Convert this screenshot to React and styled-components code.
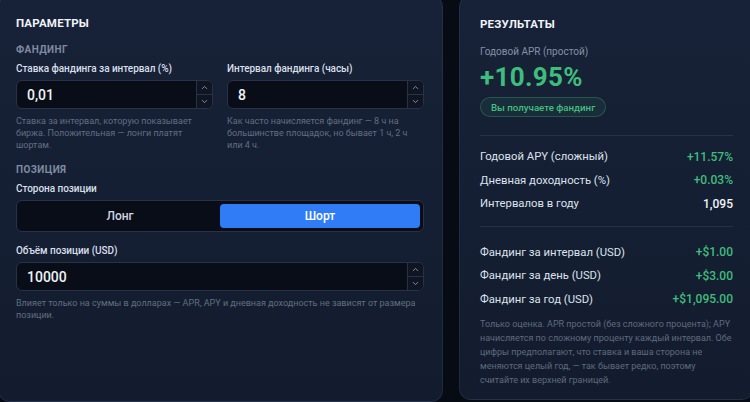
import React from "react";
import styled, { createGlobalStyle } from "styled-components";
import { ChevronUp, ChevronDown } from "lucide-react";

const Global = createGlobalStyle`
  html, body { margin: 0; padding: 0; overflow: hidden; background: #070b13; }
  body { font-family: Roboto, "Noto Sans", sans-serif; color: #e6ebf3; -webkit-font-smoothing: antialiased; }
  * { box-sizing: border-box; }
`;

const Page = styled.div`
  display: grid;
  grid-template-columns: 445px 295px;
  column-gap: 16px;
  align-items: start;
  margin: -5px 0 0 -2px;
`;

const Panel = styled.section`
  background: linear-gradient(180deg, #172238 0%, #131c2e 100%);
  border: 1px solid rgba(130, 150, 190, 0.12);
  border-radius: 12px;
  height: ${(p) => p.$h}px;
  padding: ${(p) => p.$pad};
`;

const Title = styled.h2`
  margin: 0;
  font-size: 11.5px;
  line-height: 16px;
  font-weight: 700;
  letter-spacing: 0.2px;
  color: #f1f4f9;
`;

const Section = styled.div`
  margin-top: ${(p) => p.$mt}px;
  font-size: 10px;
  line-height: 14px;
  font-weight: 700;
  letter-spacing: 0.4px;
  color: #7f8aa0;
`;

const Label = styled.div`
  margin-top: ${(p) => p.$mt || 5}px;
  font-size: 10px;
  line-height: 14px;
  font-weight: 500;
  letter-spacing: -0.05px;
  color: #d9dfe9;
`;

const Cols = styled.div`
  display: grid;
  grid-template-columns: 1fr 1fr;
  column-gap: 14px;
`;

const Field = styled.div`
  margin-top: 4px;
  height: 29px;
  display: flex;
  background: #090d17;
  border: 1px solid #283246;
  border-radius: 6px;
  overflow: hidden;
`;

const Value = styled.div`
  flex: 1;
  padding-left: 10px;
  display: flex;
  align-items: center;
  font-size: 14px;
  font-weight: 500;
  color: #eef2f8;
`;

const Stepper = styled.div`
  width: 16px;
  display: flex;
  flex-direction: column;
  border-left: 1px solid #283246;
  background: #0f1522;
`;

const StepBtn = styled.div`
  flex: 1;
  display: flex;
  align-items: center;
  justify-content: center;
  color: #9aa4b6;
  & + & { border-top: 1px solid #283246; }
`;

const Help = styled.p`
  margin: 6px 0 0;
  font-size: 9px;
  line-height: 12px;
  color: #626d81;
`;

const Toggle = styled.div`
  margin-top: 4px;
  height: 32px;
  padding: 3px;
  display: grid;
  grid-template-columns: 1fr 1fr;
  background: #090d17;
  border: 1px solid #283246;
  border-radius: 6px;
`;

const ToggleBtn = styled.div`
  display: flex;
  align-items: center;
  justify-content: center;
  border-radius: 4px;
  font-size: 12px;
  font-weight: 500;
  color: ${(p) => (p.$active ? "#ffffff" : "#cfd6e2")};
  background: ${(p) => (p.$active ? "#2f7cf6" : "transparent")};
`;

const Muted = styled.div`
  margin-top: ${(p) => p.$mt}px;
  font-size: 10px;
  line-height: 14px;
  color: #8590a4;
`;

const Big = styled.div`
  margin-top: 3px;
  font-size: 26px;
  line-height: 30px;
  font-weight: 700;
  letter-spacing: 0.3px;
  color: #3fbd7c;
`;

const Pill = styled.div`
  display: inline-flex;
  align-items: center;
  margin-top: 5px;
  height: 20px;
  padding: 0 10px;
  border-radius: 999px;
  border: 1px solid rgba(63, 189, 124, 0.3);
  background: rgba(63, 189, 124, 0.08);
  font-size: 9.7px;
  font-weight: 500;
  color: #44bf80;
`;

const Divider = styled.hr`
  margin: ${(p) => p.$m};
  border: 0;
  border-top: 1px solid rgba(140, 160, 200, 0.14);
`;

const Row = styled.div`
  height: 23.5px;
  display: flex;
  align-items: center;
  justify-content: space-between;
  font-size: 11.3px;
  font-weight: 400;
  color: #dce2ec;
`;

const Num = styled.span`
  font-size: 12px;
  font-weight: 500;
  color: ${(p) => (p.$green ? "#3fbd7c" : "#f1f4f9")};
`;

const Footer = styled.p`
  margin: 6px 0 0;
  font-size: 9px;
  line-height: 14px;
  color: #5f6a7e;
`;

function NumberField({ value }) {
  return (
    <Field>
      <Value>{value}</Value>
      <Stepper>
        <StepBtn><ChevronUp size={9} strokeWidth={2.2} /></StepBtn>
        <StepBtn><ChevronDown size={9} strokeWidth={2.2} /></StepBtn>
      </Stepper>
    </Field>
  );
}

const rows1 = [
  ["Годовой APY (сложный)", "+11.57%", true],
  ["Дневная доходность (%)", "+0.03%", true],
  ["Интервалов в году", "1,095", false],
];
const rows2 = [
  ["Фандинг за интервал (USD)", "+$1.00", true],
  ["Фандинг за день (USD)", "+$3.00", true],
  ["Фандинг за год (USD)", "+$1,095.00", true],
];

export default function App() {
  return (
    <>
      <Global />
      <Page>
        <Panel $h={407} $pad="19px 18px 20px 17px">
          <Title>ПАРАМЕТРЫ</Title>
          <Section $mt={12}>ФАНДИНГ</Section>
          <Cols>
            <div>
              <Label>Ставка фандинга за интервал (%)</Label>
              <NumberField value="0,01" />
              <Help>Ставка за интервал, которую показывает биржа. Положительная — лонги платят шортам.</Help>
            </div>
            <div>
              <Label>Интервал фандинга (часы)</Label>
              <NumberField value="8" />
              <Help>Как часто начисляется фандинг — 8 ч на большинстве площадок, но бывает 1 ч, 2 ч или 4 ч.</Help>
            </div>
          </Cols>
          <Section $mt={12}>ПОЗИЦИЯ</Section>
          <Label>Сторона позиции</Label>
          <Toggle>
            <ToggleBtn>Лонг</ToggleBtn>
            <ToggleBtn $active>Шорт</ToggleBtn>
          </Toggle>
          <Label $mt={12}>Объём позиции (USD)</Label>
          <NumberField value="10000" />
          <Help>Влияет только на суммы в долларах — APR, APY и дневная доходность не зависят от размера позиции.</Help>
        </Panel>
        <Panel $h={405} $pad="20px 20px 20px 20px">
          <Title>РЕЗУЛЬТАТЫ</Title>
          <Muted $mt={13}>Годовой APR (простой)</Muted>
          <Big>+10.95%</Big>
          <Pill>Вы получаете фандинг</Pill>
          <Divider $m="18px 0 9px" />
          {rows1.map(([l, v, g]) => (
            <Row key={l}><span>{l}</span><Num $green={g}>{v}</Num></Row>
          ))}
          <Divider $m="10px 0 14px" />
          {rows2.map(([l, v, g]) => (
            <Row key={l}><span>{l}</span><Num $green={g}>{v}</Num></Row>
          ))}
          <Footer>Только оценка. APR простой (без сложного процента); APY начисляется по сложному проценту каждый интервал. Обе цифры предполагают, что ставка и ваша сторона не меняются целый год, — так бывает редко, поэтому считайте их верхней границей.</Footer>
        </Panel>
      </Page>
    </>
  );
}
